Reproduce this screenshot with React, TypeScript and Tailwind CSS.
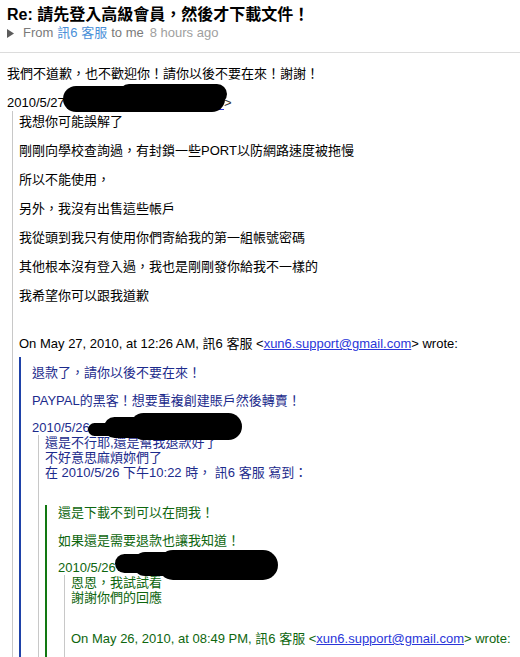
import React from "react";

// Mail.app style thread view, nested quote levels
const FONT = "font-['Liberation_Sans','Noto_Sans_CJK_TC',sans-serif]";

function Blob({ className }: { className: string }) {
  return <span className={`absolute rounded-full bg-black ${className}`} />;
}

function Paras({ lines, gap }: { lines: string[]; gap: string }) {
  return (
    <div className={`flex flex-col leading-4 ${gap}`}>
      {lines.map((l) => (
        <p key={l}>{l}</p>
      ))}
    </div>
  );
}

function Wrote({ when }: { when: string }) {
  return (
    <p className="leading-4">
      On {when}, 訊6 客服 &lt;
      <span className="text-[#2a36d9] underline">xun6.support@gmail.com</span>&gt; wrote:
    </p>
  );
}

export default function App() {
  return (
    <div className={`${FONT} h-[657px] overflow-hidden bg-white pt-[5px] text-[13px] text-black`}>
      {/* Header */}
      <div className="pl-[7px]">
        <div className="text-[16px] font-bold leading-5">Re: 請先登入高級會員，然後才下載文件！</div>
        <div className="flex items-center gap-[4px] leading-4">
          <svg width="7" height="9" viewBox="0 0 7 9" className="mr-[5px]">
            <polygon points="0,0 7,4.5 0,9" fill="#5c5c5c" />
          </svg>
          <span className="text-[#7a7a7a]">From</span>
          <span className="text-[#4a8fd8]">訊6 客服</span>
          <span className="text-[#7a7a7a]">to me</span>
          <span className="ml-[2px] text-[#a0a0a0]">8 hours ago</span>
        </div>
      </div>
      <div className="mt-[11px] h-px bg-[#dcdcdc]" />

      {/* Body */}
      <div className="mt-[13px] flex flex-col gap-[13px] pl-[7px] leading-4">
        <p>我們不道歉，也不歡迎你！請你以後不要在來！謝謝！</p>
        <div className="relative">
          2010/5/27
          <span className="absolute left-[114px] top-[14px] h-px w-[103px] bg-[#2a36d9]" />
          <span className="absolute left-[217px] top-0 text-[#333]">&gt;</span>
          <Blob className="left-[56px] top-[-9px] h-[26px] w-[162px]" />
          <Blob className="left-[112px] top-[-11px] h-[20px] w-[108px]" />
        </div>
      </div>

      {/* Quote level 1 */}
      <div className="ml-[12px] flex flex-col border-l border-[#c8c8c8] pl-[6px] pt-[3px]">
        <Paras
          gap="gap-[13px]"
          lines={[
            "我想你可能誤解了",
            "剛剛向學校查詢過，有封鎖一些PORT以防網路速度被拖慢",
            "所以不能使用，",
            "另外，我沒有出售這些帳戶",
            "我從頭到我只有使用你們寄給我的第一組帳號密碼",
            "其他根本沒有登入過，我也是剛剛發你給我不一樣的",
            "我希望你可以跟我道歉",
          ]}
        />
        <div className="mt-[32px]">
          <Wrote when="May 27, 2010, at 12:26 AM" />
        </div>

        {/* Quote level 2 (blue) */}
        <div className="mt-[5px] flex flex-col border-l-2 border-[#1f42a8] pl-[11px] pt-[8px] text-[#1c2b8c]">
          <div className="flex flex-col gap-[12px] leading-4">
            <p>退款了，請你以後不要在來！</p>
            <p>PAYPAL的黑客！想要重複創建賬戶然後轉賣！</p>
            <div className="relative leading-[14px]">
              2010/5/26
              <Blob className="left-[56px] top-[2px] h-[13px] w-[62px]" />
              <Blob className="left-[72px] top-[-4px] h-[21px] w-[80px]" />
              <Blob className="left-[98px] top-[-8px] h-[27px] w-[112px]" />
            </div>
          </div>

          {/* Quote level 3 (gray) */}
          <div className="ml-[6px] flex flex-col border-l border-[#c8c8c8] pl-[6px] leading-[15px]">
            <p>還是不行耶,還是幫我退款好了</p>
            <p>不好意思麻煩妳們了</p>
            <p>在 2010/5/26 下午10:22 時， 訊6 客服 寫到：</p>

            {/* Quote level 4 (green) */}
            <div className="mt-[25px] flex flex-col border-l-2 border-[#127812] pl-[11px] text-[#0e660e]">
              <div className="flex flex-col gap-[12px] leading-4">
                <p>還是下載不到可以在問我！</p>
                <p>如果還是需要退款也讓我知道！</p>
                <div className="relative leading-[14px]">
                  2010/5/26
                  <Blob className="left-[57px] top-[-7px] h-[19px] w-[60px]" />
                  <Blob className="left-[75px] top-[-9px] h-[24px] w-[100px]" />
                  <Blob className="left-[100px] top-[-11px] h-[30px] w-[120px]" />
                </div>
              </div>

              {/* Quote level 5 (gray) */}
              <div className="ml-[6px] flex flex-col border-l border-[#c8c8c8] pb-[40px] pl-[6px] leading-[15px]">
                <p>恩恩，我試試看</p>
                <p>謝謝你們的回應</p>
                <div className="mt-[26px]">
                  <Wrote when="May 26, 2010, at 08:49 PM" />
                </div>
              </div>
            </div>
          </div>
        </div>
      </div>
    </div>
  );
}
